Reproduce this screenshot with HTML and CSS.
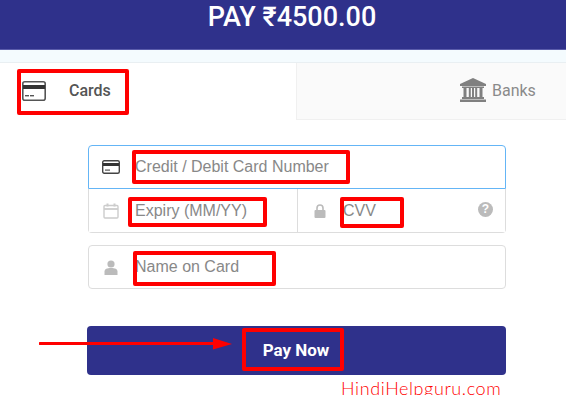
FILE: index.html
```html
<!DOCTYPE html>
<html lang="en">
<head>
    <meta charset="UTF-8">
    <meta name="viewport" content="width=device-width, initial-scale=1.0">
    <title>Pay</title>
    <link rel="stylesheet" href="styles.css">
</head>
<body>
    <div class="page">
        <header class="pay-header">PAY ₹4500.00</header>
        <div class="strip"></div>

        <nav class="tabs">
            <div class="tab tab-cards">
                <svg class="tab-icon-card" viewBox="0 0 24 20" width="24" height="20">
                    <rect x="0.8" y="0.8" width="22.4" height="18.4" rx="2" fill="#fff" stroke="#555" stroke-width="1.6"/>
                    <rect x="1" y="4" width="22" height="4" fill="#333"/>
                    <rect x="3" y="14" width="4" height="1.4" fill="#555"/>
                    <rect x="8" y="14" width="4" height="1.4" fill="#555"/>
                </svg>
                <span>Cards</span>
            </div>
            <div class="tab tab-banks">
                <svg viewBox="0 0 26 24" width="26" height="24" fill="#808080">
                    <path d="M13 0 L26 6 V8 H0 V6 Z"/>
                    <rect x="2" y="8.5" width="22" height="1.5"/>
                    <rect x="3.5" y="10" width="3" height="9"/>
                    <rect x="8.8" y="10" width="2" height="9"/>
                    <rect x="12" y="10" width="2" height="9"/>
                    <rect x="15.2" y="10" width="2" height="9"/>
                    <rect x="19.5" y="10" width="3" height="9"/>
                    <rect x="2" y="19" width="22" height="2"/>
                    <rect x="0" y="21.5" width="26" height="2.5"/>
                </svg>
                <span>Banks</span>
            </div>
        </nav>

        <form class="card-form">
            <div class="card-group">
                <div class="field field-number">
                    <span class="field-icon">
                        <svg viewBox="0 0 18 14" width="18" height="14">
                            <rect x="0.7" y="0.7" width="16.6" height="12.6" rx="1.5" fill="#fff" stroke="#444" stroke-width="1.4"/>
                            <rect x="1" y="3" width="16" height="3" fill="#333"/>
                            <rect x="3" y="9.5" width="5" height="1.2" fill="#555"/>
                        </svg>
                    </span>
                    <span class="placeholder">Credit / Debit Card Number</span>
                </div>
                <div class="field-row">
                    <div class="field field-expiry">
                        <span class="field-icon">
                            <svg viewBox="0 0 16 16" width="16" height="16" fill="none" stroke="#ccc" stroke-width="1.4">
                                <rect x="1" y="2.5" width="14" height="12.5" rx="1"/>
                                <path d="M1 6 H15" stroke-width="1.8"/>
                                <path d="M4.5 0.5 V3.5 M11.5 0.5 V3.5" stroke-width="2"/>
                            </svg>
                        </span>
                        <span class="placeholder">Expiry (MM/YY)</span>
                    </div>
                    <div class="field field-cvv">
                        <span class="field-icon">
                            <svg viewBox="0 0 12 14" width="12" height="14">
                                <path d="M3 6 V4 a3 3 0 0 1 6 0 V6" fill="none" stroke="#bbb" stroke-width="1.6"/>
                                <rect x="0.5" y="6" width="11" height="8" rx="1" fill="#bbb"/>
                            </svg>
                        </span>
                        <span class="placeholder">CVV</span>
                        <span class="help">?</span>
                    </div>
                </div>
            </div>

            <div class="field field-name">
                <span class="field-icon">
                    <svg viewBox="0 0 14 15" width="14" height="15" fill="#bbb">
                        <circle cx="7" cy="4" r="3.6"/>
                        <path d="M0.5 15 V11.5 C0.5 9 3 8 7 8 C11 8 13.5 9 13.5 11.5 V15 Z"/>
                    </svg>
                </span>
                <span class="placeholder">Name on Card</span>
            </div>

            <button class="pay-button" type="button">Pay Now</button>
        </form>

        <div class="watermark">HindiHelpguru.com</div>

        <!-- red markup drawn over the screenshot -->
        <div class="mark mark-cards"></div>
        <div class="mark mark-number"></div>
        <div class="mark mark-expiry"></div>
        <div class="mark mark-cvv"></div>
        <div class="mark mark-name"></div>
        <div class="mark mark-pay"></div>
        <svg class="arrow" viewBox="0 0 194 14" width="194" height="14">
            <path d="M1 6.5 H176" stroke="#f00" stroke-width="3" stroke-linecap="round"/>
            <path d="M174 1 L193 7 L174 12.5 Z" fill="#f00"/>
        </svg>
    </div>
</body>
</html>
```

FILE: styles.css
```css
* {
    margin: 0;
    padding: 0;
    box-sizing: border-box;
}

body {
    font-family: 'Liberation Sans', Arial, sans-serif;
    background: white;
    overflow: hidden;
}

.page {
    position: relative;
    width: 566px;
    height: 395px;
    overflow: hidden;
}

.pay-header {
    height: 50px;
    padding-left: 18px;
    background: #2f318b;
    border-bottom: 1px solid #5a5cab;
    color: white;
    font-family: Roboto, sans-serif;
    font-size: 27px;
    font-weight: 500;
    line-height: 35px;
    text-align: center;
}

.strip {
    height: 13px;
    background: #f4fbfe;
    border-bottom: 1px solid #e9eff2;
}

.tabs {
    display: flex;
    height: 57px;
    font-family: Roboto, sans-serif;
}

.tab {
    display: flex;
    align-items: center;
}

.tab-cards {
    width: 296px;
    padding: 0 0 2px 22px;
    gap: 23px;
    color: #555;
    font-size: 16px;
    font-weight: 500;
}

.tab-banks {
    flex: 1;
    padding: 0 0 2px 163px;
    gap: 6px;
    background: #fafafa;
    border-bottom: 1px solid #f0f0f0;
    border-left: 1px solid #f0f0f0;
    color: #8a8a8a;
    font-size: 16px;
}

.card-form {
    display: flex;
    flex-direction: column;
    width: 419px;
    margin: 25px 0 0 87px;
}

.card-group {
    margin-left: 1px;
    width: 418px;
}

.field {
    display: flex;
    align-items: center;
    background: white;
    color: #888;
    font-size: 16px;
}

.field-icon {
    display: flex;
    justify-content: center;
    width: 46px;
    flex: none;
    padding-right: 3px;
}

.field-number {
    height: 44px;
    border: 1px solid #64b5f6;
    border-radius: 4px 4px 0 0;
}

.field-row {
    display: flex;
    height: 44px;
    border: 1px solid #ddd;
    border-top: 0;
    border-radius: 0 0 4px 4px;
}

.field-expiry {
    width: 209px;
    border-right: 1px solid #ddd;
}

.field-cvv {
    flex: 1;
}

.field-cvv .placeholder {
    flex: 1;
    margin-left: -1px;
}

.help {
    width: 15px;
    height: 15px;
    margin: 0 12px 3px 0;
    border-radius: 50%;
    background: #bbb;
    color: white;
    font-size: 12px;
    font-weight: 700;
    line-height: 15px;
    text-align: center;
}

.field-name {
    width: 418px;
    height: 44px;
    margin: 12px 0 0 1px;
    border: 1px solid #ddd;
    border-radius: 4px;
}

.pay-button {
    height: 49px;
    margin-top: 37px;
    padding: 0 1px 2px 0;
    background: #2f318b;
    border: 0;
    border-radius: 4px;
    color: white;
    font-family: Roboto, sans-serif;
    font-size: 17px;
    font-weight: 700;
}

.watermark {
    position: absolute;
    left: 341px;
    top: 377px;
    color: #f00;
    font-family: Lato, sans-serif;
    font-size: 18px;
    font-weight: 300;
    letter-spacing: 0.6px;
}

.mark {
    position: absolute;
    border: 4px solid #f00;
    border-radius: 2px;
}

.mark-cards { left: 17px; top: 69px; width: 112px; height: 46px; }
.mark-number { left: 132px; top: 150px; width: 218px; height: 34px; }
.mark-expiry { left: 128px; top: 197px; width: 139px; height: 30px; }
.mark-cvv { left: 340px; top: 197px; width: 64px; height: 31px; }
.mark-name { left: 133px; top: 251px; width: 143px; height: 35px; }
.mark-pay { left: 242px; top: 328px; width: 102px; height: 43px; }

.arrow {
    position: absolute;
    left: 39px;
    top: 337px;
}
```
